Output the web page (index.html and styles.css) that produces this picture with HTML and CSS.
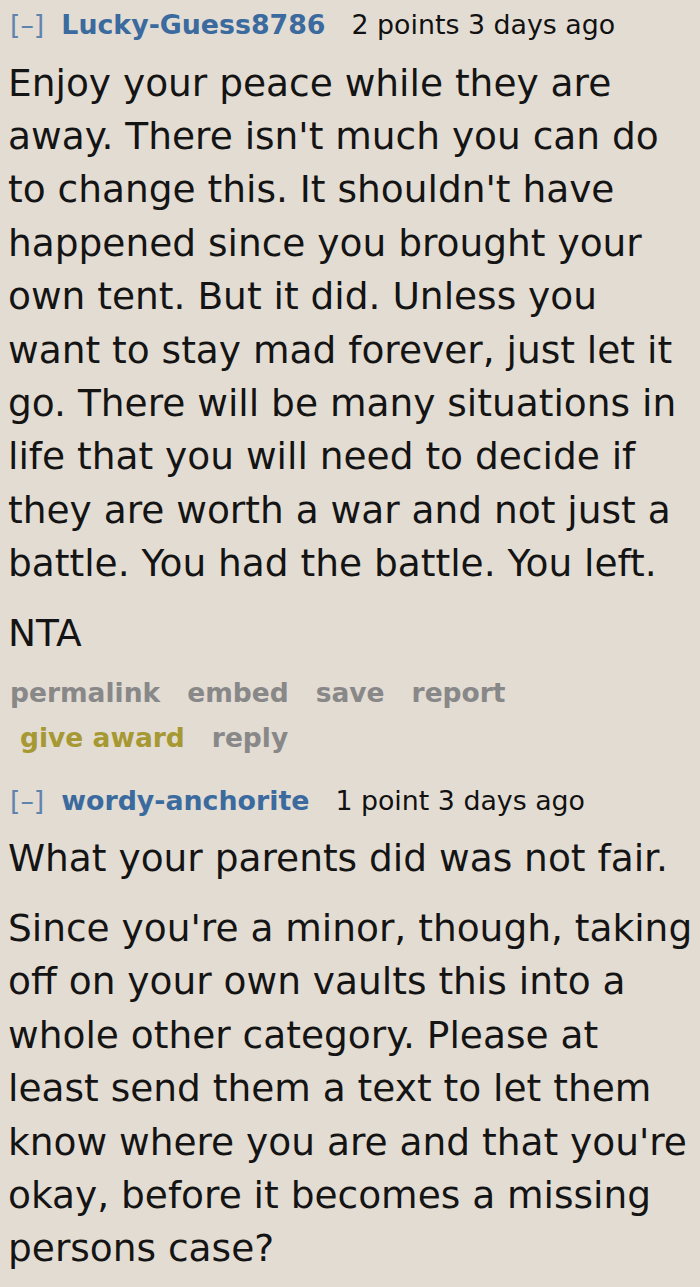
FILE: index.html
```html
<!DOCTYPE html>
<html lang="en">
<head>
<meta charset="utf-8">
<title>Comments</title>
<link rel="stylesheet" href="styles.css">
</head>
<body>
<div class="thread">
  <div class="comment">
    <p class="tagline">
      <a class="expand">[–]</a>
      <a class="author">Lucky-Guess8786</a>
      <span class="score">2 points 3 days ago</span>
    </p>
    <div class="md">
      <p>Enjoy your peace while they are away. There isn't much you can do to change this. It shouldn't have happened since you brought your own tent. But it did. Unless you want to stay mad forever, just let it go. There will be many situations in life that you will need to decide if they are worth a war and not just a battle. You had the battle. You left.</p>
      <p>NTA</p>
    </div>
    <ul class="buttons">
      <li><a>permalink</a></li>
      <li><a>embed</a></li>
      <li><a>save</a></li>
      <li><a>report</a></li>
      <li class="award"><a>give award</a></li>
      <li><a>reply</a></li>
    </ul>
  </div>
  <div class="comment">
    <p class="tagline">
      <a class="expand">[–]</a>
      <a class="author">wordy-anchorite</a>
      <span class="score">1 point 3 days ago</span>
    </p>
    <div class="md">
      <p>What your parents did was not fair.</p>
      <p>Since you're a minor, though, taking off on your own vaults this into a whole other category. Please at least send them a text to let them know where you are and that you're okay, before it becomes a missing persons case?</p>
    </div>
  </div>
</div>
</body>
</html>
```
FILE: styles.css
```css
html, body {
  margin: 0;
  padding: 0;
  background: #e3dcd3;
}
body {
  font-family: "DejaVu Sans", Verdana, sans-serif;
  color: #111;
}
.thread {
  padding: 9px 4px 0 8px;
  display: flex;
  flex-direction: column;
}
.comment {
  display: flex;
  flex-direction: column;
}
.tagline {
  margin: 0;
  padding-left: 2px;
  font-size: 26.8px;
  line-height: 32px;
  display: flex;
  align-items: baseline;
  white-space: nowrap;
}
.expand {
  color: #5f84ad;
  font-weight: normal;
  margin-right: 17px;
}
.author {
  color: #3a6a9e;
  font-weight: bold;
  margin-right: 26px;
}
.score {
  color: #111;
}
.md {
  font-size: 37.5px;
  line-height: 53.4px;
  color: #141414;
  margin-top: 15.5px;
}
.md p {
  margin: 0 0 16px 0;
}
.md p:last-child {
  margin-bottom: 0;
}
.buttons {
  list-style: none;
  margin: 10px 0 25px 0;
  padding: 0 0 0 2px;
  display: flex;
  flex-wrap: wrap;
  column-gap: 27px;
  row-gap: 0;
  width: 620px;
  font-size: 26.5px;
  line-height: 45px;
  font-weight: bold;
  color: #888;
}
.buttons .award {
  margin-left: 10px;
  color: #a69832;
}
```
